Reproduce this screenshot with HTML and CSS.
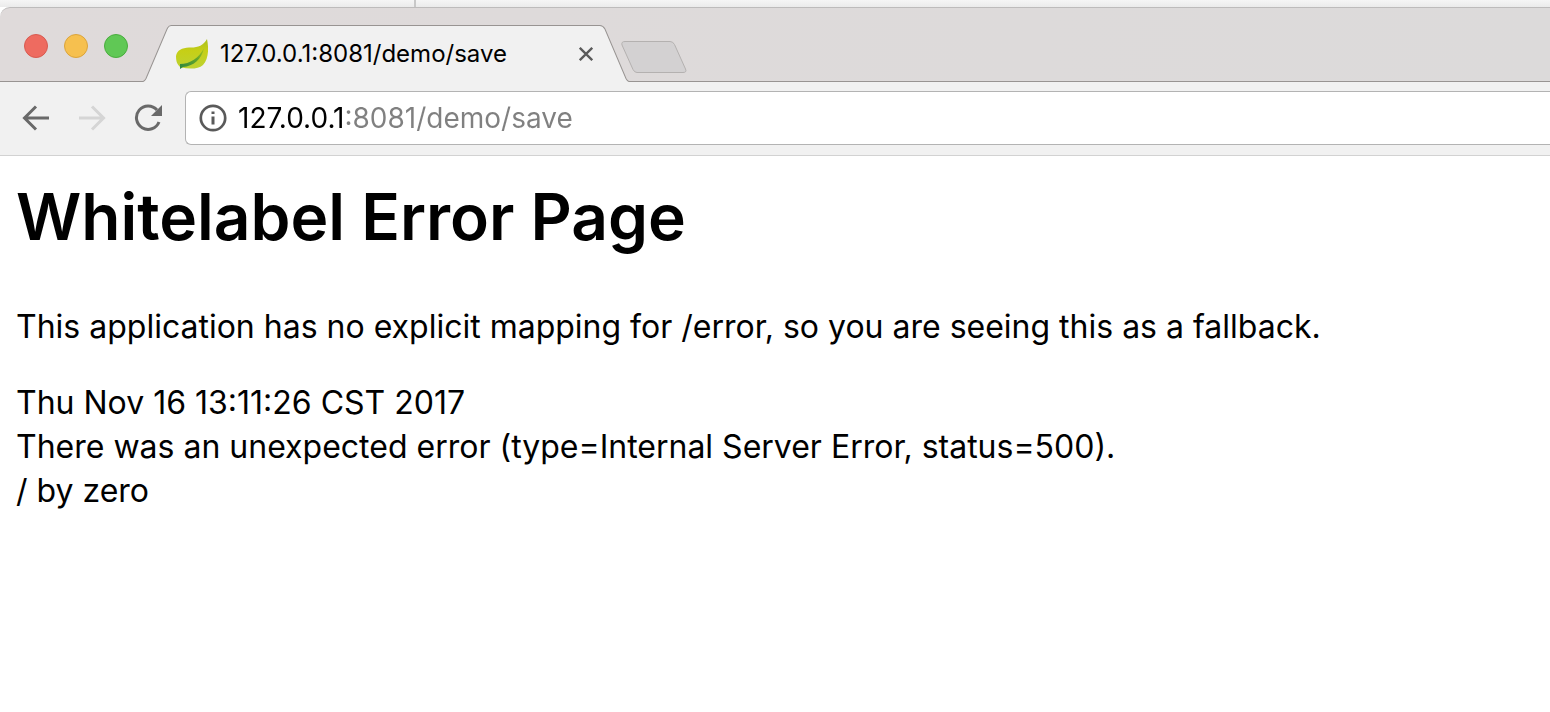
FILE: index.html
```html
<!DOCTYPE html>
<html lang="en">
<head>
<meta charset="utf-8">
<title>127.0.0.1:8081/demo/save</title>
<link rel="stylesheet" href="styles.css">
</head>
<body>
<div class="desktop"></div>
<div class="window">
  <header class="tab-strip">
    <div class="lights">
      <button class="light light-close" aria-label="Close window"></button>
      <button class="light light-min" aria-label="Minimize window"></button>
      <button class="light light-max" aria-label="Zoom window"></button>
    </div>
    <div class="tab">
      <svg class="tab-shape" viewBox="0 0 485 57" preserveAspectRatio="none" aria-hidden="true">
        <path d="M0 56.500C1.500 56.500 2 55.500 3 53.500L24 4C25.500 1.500 25.500 .5 28 .5H456C458.500 .5 459.500 1.500 461 4L482 53.500C483 55.500 483.500 56.500 485 56.500V57H0Z" fill="#f1f1f1"/>
        <path d="M0 56.500C1.500 56.500 2 55.500 3 53.500L24 4C25.500 1.500 25.500 .5 28 .5H456C458.500 .5 459.500 1.500 461 4L482 53.500C483 55.500 483.500 56.500 485 56.500" fill="none" stroke="#989492"/>
      </svg>
      <svg class="favicon" viewBox="0 0 32 32" aria-hidden="true">
        <defs>
          <linearGradient id="leaf" x1="0" y1="0" x2="0" y2="1"><stop offset="0" stop-color="#a9bf1c"/><stop offset=".4" stop-color="#c6cf16"/><stop offset="1" stop-color="#bdd232"/></linearGradient>
          <linearGradient id="vein" x1="0" y1="1" x2="1" y2="0"><stop offset="0" stop-color="#2d8540"/><stop offset=".6" stop-color="#63a52b"/><stop offset="1" stop-color="#a9c41c"/></linearGradient>
        </defs>
        <path d="M31 1C33 11 32.500 21 27 27C22 31.500 13 31 5 29.500C1 27 0 23 0 18C1 12 6 10 13 9.500C21 10 27 8 31 1Z" fill="url(#leaf)"/>
        <path d="M4 26C14 26 23 20 28 10C26 21 17 28.500 7 29L4 31Z" fill="url(#vein)"/>
      </svg>
      <span class="tab-title">127.0.0.1:8081/demo/save</span>
      <button class="tab-close" aria-label="Close tab">
        <svg viewBox="0 0 14 14" width="14" height="14"><path d="M.8 .8L13.200 13.200M13.200 .8L.8 13.200" stroke="#5a5a5a" stroke-width="2.300"/></svg>
      </button>
    </div>
    <button class="new-tab" aria-label="New tab">
      <svg viewBox="0 0 66 32" width="66" height="32"><path d="M4 .5H49Q52 .5 53.500 3.500L64.500 28Q66 31.500 62 31.500H16Q13.500 31.500 12 28.500L1 4Q0 .5 4 .5Z" fill="#d3d1d2" stroke="#b4b1b0"/></svg>
    </button>
  </header>
  <nav class="toolbar" aria-label="Navigation">
    <button class="nav" aria-label="Back">
      <svg viewBox="0 0 28 28" width="28" height="28"><path d="M27 14H2.500M14 2.500L2.500 14L14 25.500" fill="none" stroke="#696969" stroke-width="3"/></svg>
    </button>
    <button class="nav" aria-label="Forward" disabled>
      <svg viewBox="0 0 28 28" width="28" height="28"><path d="M1 14H25.500M14 2.500L25.500 14L14 25.500" fill="none" stroke="#d5d5d5" stroke-width="3"/></svg>
    </button>
    <button class="nav" aria-label="Reload">
      <svg viewBox="0 0 28 28" width="28" height="28"><path d="M25 18A11.700 11.700 0 1 1 23 6" fill="none" stroke="#696969" stroke-width="3"/><path d="M28 1V12H17Z" fill="#696969"/></svg>
    </button>
    <div class="omnibox">
      <svg class="info" viewBox="0 0 28 28" width="28" height="28" aria-hidden="true"><circle cx="14" cy="14" r="12.200" fill="none" stroke="#5a5a5a" stroke-width="2.700"/><path d="M12.500 7.500H15.500V10H12.500ZM12.500 12.500H15.500V20.500H12.500Z" fill="#5a5a5a"/></svg>
      <input class="address" type="text" aria-label="Address" value="127.0.0.1:8081/demo/save" spellcheck="false">
    </div>
  </nav>
  <main class="page">
    <h1 class="title">Whitelabel Error Page</h1>
    <p class="message">This application has no explicit mapping for /error, so you are seeing this as a fallback.</p>
    <div>Thu Nov 16 13:11:26 CST 2017</div>
    <div>There was an unexpected error (type=Internal Server Error, status=500).</div>
    <div>/ by zero</div>
  </main>
</div>
</body>
</html>
```
FILE: styles.css
```css
* { box-sizing: border-box; }
body { margin: 0; background: #fff; color: #000; font-family: Inter, "Noto Sans", sans-serif; overflow-x: hidden; }
button { border: 0; padding: 0; background: none; display: flex; align-items: center; justify-content: center; }
svg { display: block; }
.desktop { height: 7px; background: linear-gradient(90deg, transparent 414px, #c8c8c8 414px, #c8c8c8 416px, transparent 416px), linear-gradient(#f5f5f5, #ebebeb); }
.window { background: #fff; }
.tab-strip { display: flex; align-items: flex-end; height: 75px; padding-left: 24px; border-top: 1px solid #bdbbbb; border-bottom: 1px solid #989492; border-top-left-radius: 10px; background: linear-gradient(90deg, #dfdada, #dcdada); }
.lights { display: flex; gap: 16px; margin-bottom: 23px; }
.light { width: 24px; height: 24px; border-radius: 50%; border: 1px solid; }
.light-close { background: #ee6b60; border-color: #d85a50; }
.light-min { background: #f6c04f; border-color: #dba43b; }
.light-max { background: #60c855; border-color: #49ad3d; }
.tab { position: relative; display: flex; align-items: center; width: 486px; height: 57px; margin: 0 0 -1px 15px; padding: 0 36px 0 33px; }
.tab-shape { position: absolute; inset: 0; width: 100%; height: 100%; }
.favicon { position: relative; width: 32px; height: 32px; }
.tab-title { position: relative; flex: 1; margin-left: 12px; font-size: 24px; white-space: nowrap; }
.tab-close { position: relative; }
.new-tab { margin: 0 0 8px -8px; }
.toolbar { display: flex; align-items: center; height: 74px; padding: 0 0 2px 22px; background: #f1f1f1; border-bottom: 1px solid #d2d2d2; }
.nav { width: 28px; height: 28px; margin-right: 28px; }
.omnibox { display: flex; flex: 1; align-items: center; height: 54px; margin-left: -5px; padding-left: 13px; border: 1px solid #b3b3b3; border-right: 0; border-radius: 6px 0 0 6px; background: #fff; }
.address { flex: 1; min-width: 0; margin-left: 11px; padding: 0; border: 0; outline: 0; font: 28px Inter, "Noto Sans", sans-serif; color: transparent; caret-color: #000; background: linear-gradient(90deg, #000 107px, #808080 107px); background-clip: text; -webkit-background-clip: text; }
.page { padding: 17px 16px; font-size: 32px; line-height: 44px; }
.title { margin: 0 0 44px; font-size: 64px; line-height: 88px; font-weight: 600; }
.message { margin: 0 0 32px; }
```
